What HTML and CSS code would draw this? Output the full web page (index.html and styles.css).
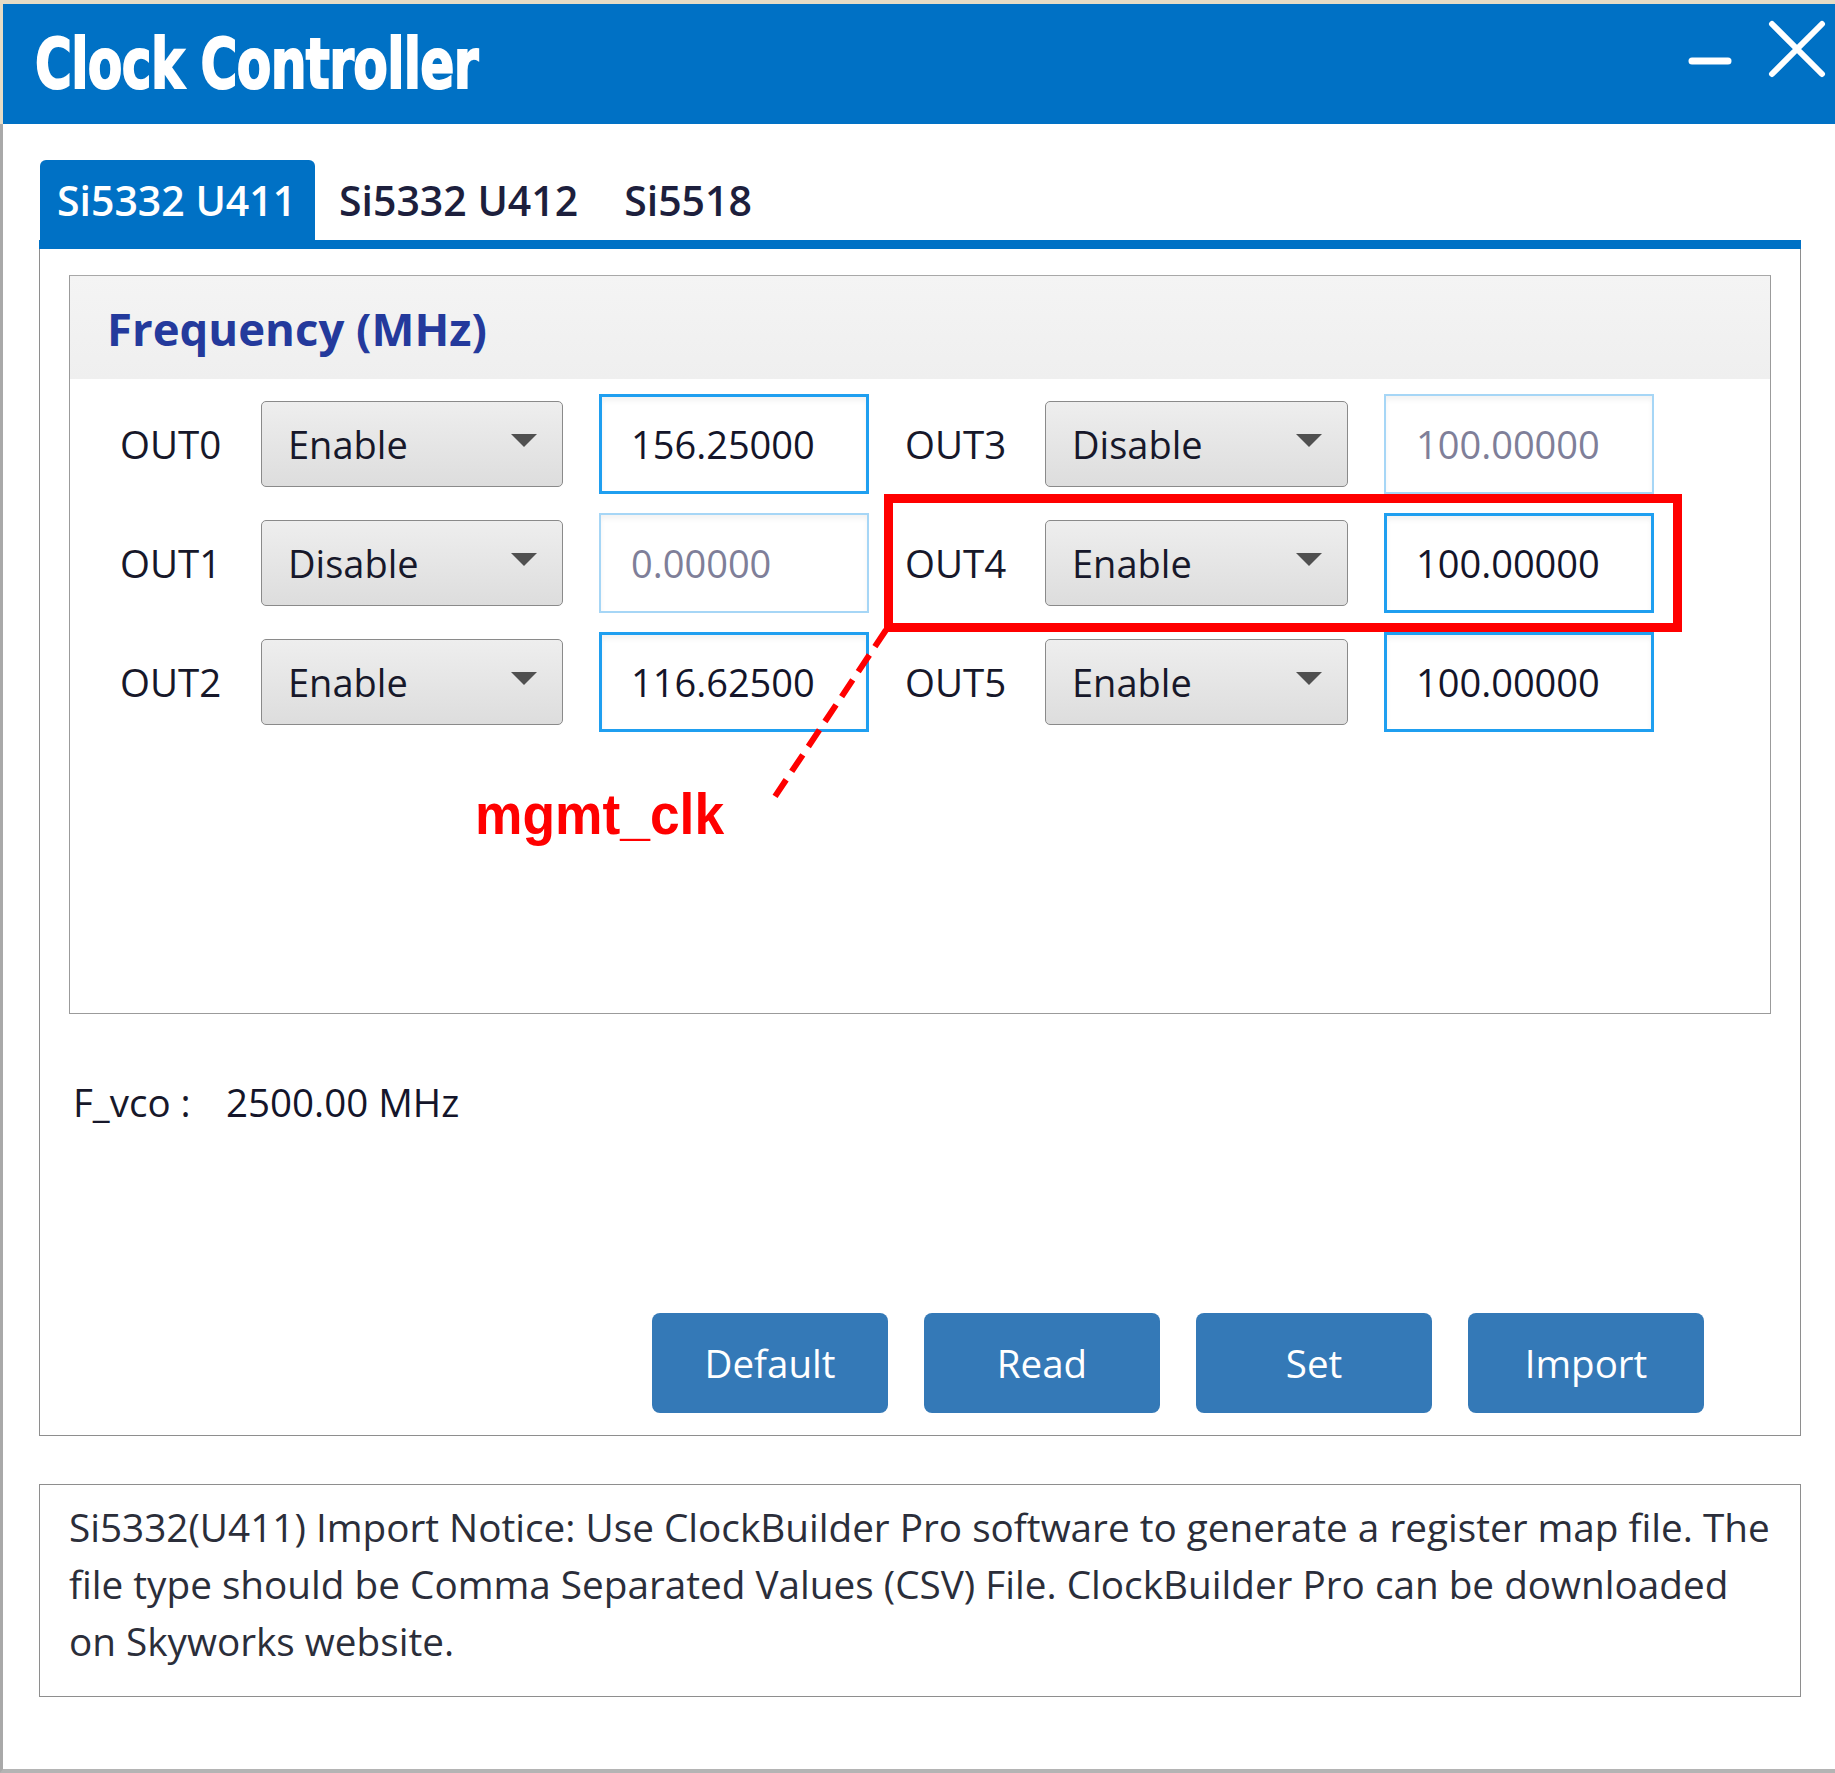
FILE: index.html
```html
<!DOCTYPE html>
<html>
<head>
<meta charset="utf-8">
<title>Clock Controller</title>
<link rel="stylesheet" href="styles.css">
</head>
<body>
<div class="page">
  <header class="titlebar">
    <h1 class="title"><span class="title-text">Clock Controller</span></h1>
    <div class="win-controls">
      <svg class="win-min" width="44" height="12" viewBox="0 0 44 12"><line x1="4" y1="6" x2="40" y2="6" stroke="#fff" stroke-width="7" stroke-linecap="round"/></svg>
      <svg class="win-close" width="60" height="60" viewBox="0 0 60 60"><path d="M5 5 L55 55 M55 5 L5 55" stroke="#fff" stroke-width="6" stroke-linecap="round"/></svg>
    </div>
  </header>

  <main class="body">
    <nav class="tabs">
      <div class="tab active">Si5332 U411</div>
      <div class="tab">Si5332 U412</div>
      <div class="tab">Si5518</div>
    </nav>

    <section class="tabpanel">
      <div class="group">
        <div class="group-head">Frequency (MHz)</div>
        <div class="grid">
          <div class="lbl">OUT0</div>
          <div class="select"><span>Enable</span><i class="caret"></i></div>
          <div class="field">156.25000</div>
          <div class="lbl">OUT3</div>
          <div class="select"><span>Disable</span><i class="caret"></i></div>
          <div class="field off">100.00000</div>

          <div class="lbl">OUT1</div>
          <div class="select"><span>Disable</span><i class="caret"></i></div>
          <div class="field off">0.00000</div>
          <div class="lbl">OUT4</div>
          <div class="select"><span>Enable</span><i class="caret"></i></div>
          <div class="field">100.00000</div>

          <div class="lbl">OUT2</div>
          <div class="select"><span>Enable</span><i class="caret"></i></div>
          <div class="field">116.62500</div>
          <div class="lbl">OUT5</div>
          <div class="select"><span>Enable</span><i class="caret"></i></div>
          <div class="field">100.00000</div>
        </div>
      </div>

      <div class="vco"><span class="vco-key">F_vco :</span><span class="vco-val">2500.00 MHz</span></div>

      <div class="actions">
        <button class="btn">Default</button>
        <button class="btn">Read</button>
        <button class="btn">Set</button>
        <button class="btn">Import</button>
      </div>
    </section>

    <section class="notice">
      Si5332(U411) Import Notice: Use ClockBuilder Pro software to generate a register map file. The file type should be Comma Separated Values (CSV) File. ClockBuilder Pro can be downloaded on Skyworks website.
    </section>
  </main>

  <div class="hl-box"></div>
  <svg class="hl-line" width="140" height="190" viewBox="0 0 140 190">
    <line x1="124" y1="4" x2="8" y2="178" stroke="#ff0000" stroke-width="6" stroke-dasharray="20 10"/>
  </svg>
  <div class="hl-text">mgmt_clk</div>
</div>
</body>
</html>
```

FILE: styles.css
```css
* { box-sizing: border-box; }

html, body {
  margin: 0;
  padding: 0;
  background: #ffffff;
}

.page {
  position: relative;
  width: 1835px;
  height: 1773px;
  border-top: 4px solid #e6dcc6;
  display: flex;
  flex-direction: column;
  font-family: "Open Sans", "Noto Sans", "Liberation Sans", sans-serif;
  overflow: hidden;
}

/* ---------- title bar ---------- */
.titlebar {
  height: 120px;
  border-left: 3px solid #e6dcc6;
  background: #0071c5;
  display: flex;
  align-items: center;
  padding-left: 32px;
  flex: none;
}

.title {
  margin: 0;
  font-family: "DejaVu Sans", "Liberation Sans", sans-serif;
  font-weight: bold;
  font-size: 70px;
  line-height: 1;
  color: #ffffff;
  white-space: nowrap;
  width: 460px;
}

.title-text {
  display: inline-block;
  transform: scaleX(0.72);
  transform-origin: left center;
  letter-spacing: -1px;
  -webkit-text-stroke: 2px #ffffff;
}

.win-controls {
  margin-left: auto;
  align-self: stretch;
  display: flex;
  align-items: flex-start;
  padding-right: 8px;
}

.win-min {
  margin-top: 51px;
  margin-right: 35px;
}

.win-close {
  margin-top: 15px;
}

/* ---------- body ---------- */
.body {
  flex: 1;
  border-left: 3px solid #a9a9a9;
  border-bottom: 4px solid #b4b4b4;
  padding: 36px 34px 0 36px;
  display: flex;
  flex-direction: column;
}

.tabs {
  display: flex;
  height: 89px;
  border-bottom: 9px solid #0071c5;
  padding-left: 1px;
}

.tab {
  height: 80px;
  display: flex;
  align-items: center;
  padding: 0 20px 0 24px;
  font-size: 41px;
  font-weight: 600;
  color: #1d1f3d;
  white-space: nowrap;
}

.tab.active {
  background: #0071c5;
  color: #ffffff;
  padding: 0 18px 0 17px;
  border-radius: 6px 6px 0 0;
  width: 275px;
}

.tab:last-child { padding-left: 26px; }

.tabpanel {
  height: 1187px;
  border: 1px solid #8e8e8e;
  border-top: none;
  display: flex;
  flex-direction: column;
  padding: 26px 29px 22px 29px;
}

/* ---------- frequency group ---------- */
.group {
  height: 739px;
  border: 1px solid #9b9b9b;
  border-top-color: #a8a8a8;
  flex: none;
}

.group-head {
  height: 103px;
  background: linear-gradient(#f4f4f4, #efefef);
  padding-left: 37px;
  display: flex;
  align-items: center;
  font-size: 45.5px;
  font-weight: bold;
  color: #243a9c;
}

.grid {
  margin-top: 15px;
  padding-left: 50px;
  display: grid;
  grid-template-columns: 105px 302px 270px 104px 303px 270px;
  grid-auto-rows: 100px;
  column-gap: 36px;
  row-gap: 19px;
  align-items: center;
}

.lbl {
  font-size: 38.5px;
  color: #17182a;
}

.select {
  height: 86px;
  border: 1px solid #8a8a8a;
  border-radius: 5px;
  background: linear-gradient(#eeeeee, #dddddd);
  display: flex;
  align-items: center;
  padding: 0 25px 0 26px;
  font-size: 38px;
  color: #17182a;
}

.caret {
  margin-left: auto;
  width: 0;
  height: 0;
  border-left: 13px solid transparent;
  border-right: 13px solid transparent;
  border-top: 13px solid #505050;
  margin-top: -8px;
}

.field {
  height: 100px;
  border: 3px solid #1f9ff0;
  background: #ffffff;
  box-shadow: inset 0 4px 5px rgba(0, 0, 0, 0.05);
  display: flex;
  align-items: center;
  padding-left: 29px;
  font-size: 38px;
  color: #14152a;
}

.field.off {
  border: 2px solid #a6d6f6;
  padding-left: 30px;
  color: #7f7f99;
}

/* ---------- vco ---------- */
.vco {
  margin-top: 63px;
  padding-left: 4px;
  font-size: 38.5px;
  line-height: 50px;
  color: #17182a;
  display: flex;
}

.vco-key {
  width: 153px;
}

.vco-val { color: #14152a; }

/* ---------- buttons ---------- */
.actions {
  margin-top: auto;
  display: flex;
  justify-content: flex-end;
  gap: 36px;
  padding-right: 67px;
}

.btn {
  width: 236px;
  height: 100px;
  border: none;
  border-radius: 8px;
  background: #3479b7;
  color: #ffffff;
  font-family: "Open Sans", "Noto Sans", "Liberation Sans", sans-serif;
  font-size: 38.5px;
  padding: 0;
}

/* ---------- notice ---------- */
.notice {
  margin-top: 48px;
  height: 213px;
  border: 1px solid #8e8e8e;
  padding: 14px 20px 0 29px;
  font-size: 38.7px;
  line-height: 57px;
  color: #2b2e3a;
}

/* ---------- annotation overlay ---------- */
.hl-box {
  position: absolute;
  left: 884px;
  top: 490px;
  width: 798px;
  height: 138px;
  border: 9px solid #ff0000;
}

.hl-line {
  position: absolute;
  left: 762px;
  top: 622px;
}

.hl-text {
  position: absolute;
  left: 475px;
  top: 778px;
  font-family: "Liberation Sans", Arial, sans-serif;
  font-weight: bold;
  font-size: 58px;
  line-height: 64px;
  color: #ff0000;
  transform: scaleX(0.92);
  transform-origin: left center;
}
```
